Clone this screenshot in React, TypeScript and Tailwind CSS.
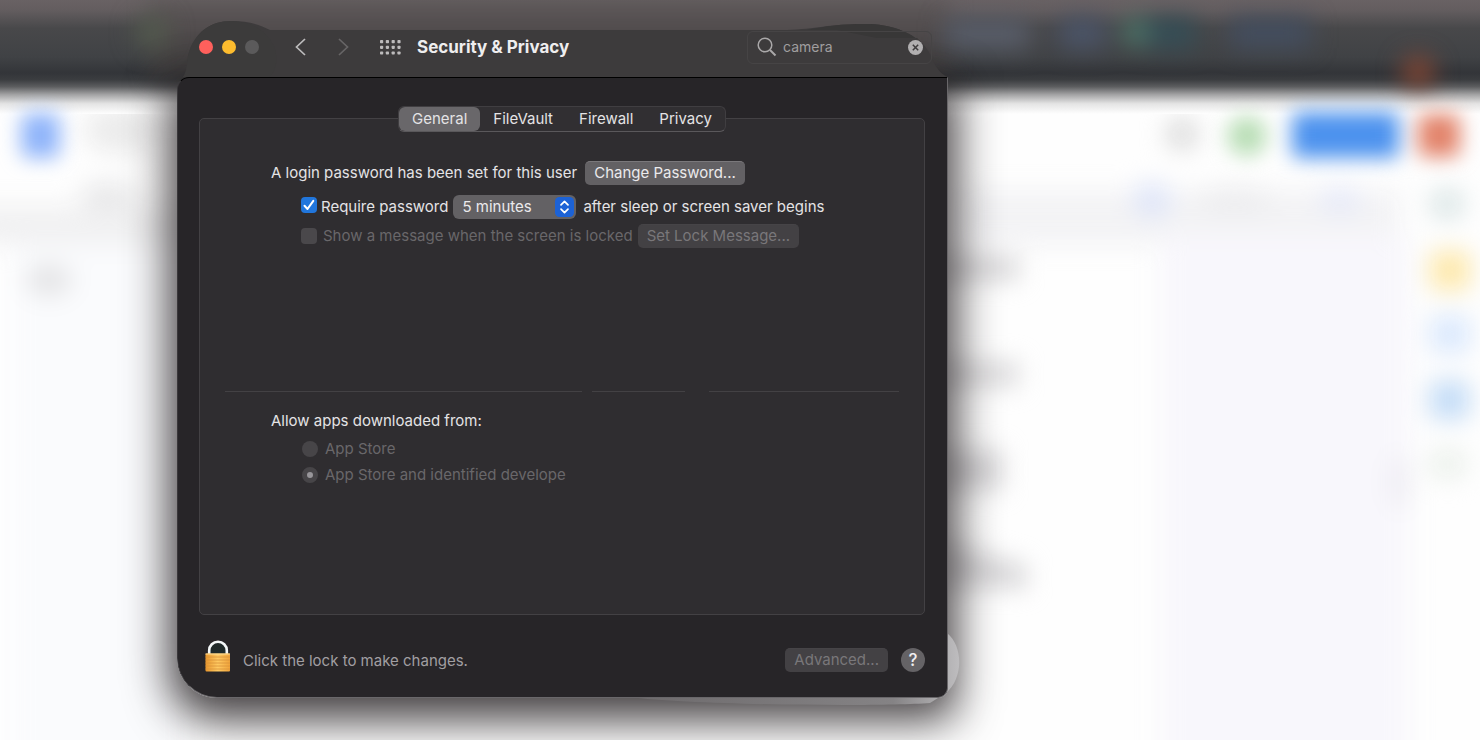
import { useState } from "react";
import type { ReactNode } from "react";

const tabs = ["General", "FileVault", "Firewall", "Privacy"];

const sources = [
  { id: "store", label: "App Store" },
  { id: "identified", label: "App Store and identified develope" },
];

function Desktop() {
  return (
    <svg
      className="absolute inset-0 h-full w-full"
      viewBox="0 0 1480 740"
      preserveAspectRatio="xMinYMin slice"
      aria-hidden="true"
    >
      <defs>
        <filter id="soft" x="-60%" y="-60%" width="220%" height="220%" colorInterpolationFilters="sRGB">
          <feGaussianBlur stdDeviation="12" />
        </filter>
        <filter id="pill" x="-60%" y="-60%" width="220%" height="220%" colorInterpolationFilters="sRGB">
          <feGaussianBlur stdDeviation="10" />
        </filter>
        <linearGradient id="bar" x1="0" y1="0" x2="0" y2="1">
          <stop offset="0" stopColor="#696264" />
          <stop offset="0.09" stopColor="#635d5f" />
          <stop offset="0.25" stopColor="#48484a" />
          <stop offset="0.5" stopColor="#404245" />
          <stop offset="0.64" stopColor="#333539" />
          <stop offset="0.7" stopColor="#3b3d40" />
          <stop offset="0.76" stopColor="#5c5d5f" />
          <stop offset="0.83" stopColor="#a3a3a4" />
          <stop offset="0.91" stopColor="#e4e4e4" />
          <stop offset="1" stopColor="#fefefe" />
        </linearGradient>
        <linearGradient id="mid" x1="0" y1="0" x2="0" y2="1">
          <stop offset="0" stopColor="#605a5b" />
          <stop offset="0.4" stopColor="#504b4c" />
          <stop offset="1" stopColor="#3b3a3a" />
        </linearGradient>
      </defs>
      <rect width="1480" height="740" fill="#fefefe" />
      <g filter="url(#soft)">
        <rect x="10" y="240" width="180" height="540" fill="#fafbfd" />
        <rect x="-30" y="205" width="220" height="40" fill="#f1f1f2" />
        <rect x="960" y="190" width="440" height="55" fill="#f3f3f5" />
        <rect x="1160" y="235" width="250" height="540" fill="#f8f7fc" />
        <ellipse cx="120" cy="130" rx="36" ry="24" fill="#ececec" />
        <ellipse cx="108" cy="196" rx="28" ry="14" fill="#e8e8e9" />
        <ellipse cx="49" cy="280" rx="23" ry="16" fill="#e4e4e6" />
        <rect x="940" y="256" width="78" height="24" fill="#d6d5d7" />
        <rect x="940" y="362" width="78" height="24" fill="#d9d8da" />
        <rect x="940" y="450" width="62" height="40" fill="#d6d5d7" />
        <path d="M940 540L1026 566V588H940z" fill="#d6d5d7" />
        <ellipse cx="1182" cy="134" rx="16" ry="16" fill="#dadada" />
        <ellipse cx="1152" cy="200" rx="20" ry="18" fill="#e0e6f8" />
        <ellipse cx="1235" cy="200" rx="40" ry="14" fill="#ededef" />
        <ellipse cx="1340" cy="200" rx="22" ry="14" fill="#e7eaf8" />
        <ellipse cx="1447" cy="204" rx="18" ry="16" fill="#dbe6e6" />
        <rect x="1430" y="251" width="40" height="39" rx="6" fill="#fde8ab" />
        <rect x="1430" y="315" width="40" height="38" rx="6" fill="#dbe9fd" />
        <rect x="1430" y="381" width="39" height="38" rx="6" fill="#c2dbf6" />
        <ellipse cx="1448" cy="464" rx="20" ry="16" fill="#ecf1ec" />
        <ellipse cx="1400" cy="482" rx="10" ry="28" fill="#edebf2" />
      </g>
      <rect width="1480" height="114" fill="url(#bar)" />
      <rect x="150" width="800" height="78" fill="url(#mid)" filter="url(#pill)" />
      <g filter="url(#soft)">
        <rect x="945" y="20" width="85" height="28" fill="#5a5f6c" />
        <rect x="1060" y="18" width="45" height="30" fill="#4b556a" />
        <circle cx="1136" cy="32" r="14" fill="#4d7a6c" />
        <rect x="1148" y="18" width="48" height="30" fill="#344e57" />
        <rect x="1230" y="18" width="80" height="30" fill="#434e60" />
        <circle cx="152" cy="32" r="17" fill="#535b4e" />
        <circle cx="1418" cy="72" r="16" fill="#874733" />
      </g>
      <g filter="url(#pill)">
        <rect x="21" y="113" width="39" height="45" rx="8" fill="#8fb4fa" />
        <ellipse cx="1247" cy="136" rx="20" ry="20" fill="#b9deb6" />
        <rect x="1292" y="112" width="107" height="46" rx="6" fill="#4c92ee" />
        <rect x="1418" y="114" width="42" height="43" rx="8" fill="#e2836a" />
      </g>
    </svg>
  );
}

function Padlock() {
  return (
    <svg width="26" height="33" viewBox="0 0 26 33" aria-hidden="true">
      <defs>
        <linearGradient id="brass" x1="0" y1="0" x2="1" y2="0">
          <stop offset="0" stopColor="#e8962c" />
          <stop offset="0.5" stopColor="#ffca62" />
          <stop offset="1" stopColor="#f0a33a" />
        </linearGradient>
      </defs>
      <path d="M4.2 15V10.5a8.8 8.8 0 0 1 17.6 0V15" fill="#202a2a" stroke="#f3f7f8" strokeWidth="2.6" />
      <rect x="0.5" y="13.5" width="24.5" height="18" rx="1" fill="url(#brass)" />
      <path d="M0.5 17h24.5M0.5 20h24.5M0.5 23h24.5M0.5 26h24.5M0.5 29h24.5" stroke="#d8923a" strokeWidth="0.8" />
      <path d="M0.5 14h24.5" stroke="#ffe09a" />
    </svg>
  );
}

function PushButton({ children, disabled }: { children: ReactNode; disabled?: boolean }) {
  return (
    <button
      type="button"
      disabled={disabled}
      className="flex h-6 items-center rounded-[5px] border-t border-[#7a787b] bg-[#636164] px-[9px] pb-px text-[15px] leading-5 text-[#ebeaec] disabled:border-[#464447] disabled:bg-[#434144] disabled:text-[#79777a]"
    >
      {children}
    </button>
  );
}

export default function App() {
  const [tab, setTab] = useState("General");
  const [query, setQuery] = useState("camera");
  const [required, setRequired] = useState(true);
  const [delay, setDelay] = useState("5 minutes");

  return (
    <div className="relative min-h-screen overflow-hidden bg-white font-['Inter','Liberation_Sans',sans-serif] text-[15px] leading-5 text-[#e4e3e5]">
      <Desktop />

      <main className="relative pt-5 pl-[177px]">
        <div className="relative w-full max-w-[771px]">
          <div className="absolute inset-x-0 top-[57px] bottom-0 rounded-tl-xl rounded-br-[10px] rounded-bl-[40px] shadow-[0_14px_44px_8px_rgba(20,15,18,0.8)]" />
          {/* Reflections around the window edge */}
          <svg className="absolute -right-3 bottom-[-9px]" width="330" height="80" viewBox="0 0 330 80" aria-hidden="true">
            <defs>
              <linearGradient id="edge" x1="0" y1="0" x2="1" y2="0">
                <stop offset="0" stopColor="#6d6a6c" />
                <stop offset="0.8" stopColor="#858385" />
                <stop offset="1" stopColor="#bebdbf" />
              </linearGradient>
            </defs>
            <path d="M317 6C334 20 333 52 316 66L300 76C250 80 60 78 0 70V66H317z" fill="url(#edge)" />
          </svg>

          {/* Title bar */}
          <header className="relative flex h-[57px] items-center pr-4 pb-[3px] pl-[22px]">
            <svg className="absolute inset-0 h-full w-full" viewBox="0 0 771 57" preserveAspectRatio="none" aria-hidden="true">
              <path
                d="M6 57C10 51 10 44 11 36C17 12 34 1 54 1C70 1 82 4 93 10H610C640 9 650 4 688 4C715 4 733 12 746 24C757 36 755 48 770 57z"
                fill="#3d3b3c"
              />
              <path d="M11 36C17 12 34 1 54 1C75 1 91 11 98 29C101 41 99 51 92 57H7C10 51 10 44 11 36z" fill="#3c3b3b" />
              <path d="M630 10C650 6 665 4 688 4C715 4 733 12 746 24L740 18H700L660 10z" fill="#383737" />
            </svg>
            <div className="relative flex w-full items-center">
              <div className="flex gap-[9px]">
                <button type="button" aria-label="Close" className="size-[14px] rounded-full bg-[#ff605c]" />
                <button type="button" aria-label="Minimize" className="size-[14px] rounded-full bg-[#fdbc2e]" />
                <button type="button" aria-label="Zoom" className="size-[14px] rounded-full bg-[#5b5a5b]" />
              </div>
              <button type="button" aria-label="Back" className="ml-9">
                <svg width="11" height="18" viewBox="0 0 11 18" fill="none" stroke="#bdbcbd" strokeWidth="1.7">
                  <path d="M10 1L1.5 9L10 17" />
                </svg>
              </button>
              <button type="button" aria-label="Forward" disabled className="ml-8">
                <svg width="11" height="18" viewBox="0 0 11 18" fill="none" stroke="#676566" strokeWidth="1.7">
                  <path d="M1 1L9.5 9L1 17" />
                </svg>
              </button>
              <button type="button" aria-label="Show all" className="ml-[31px]">
                <svg width="21" height="15" viewBox="0 0 21 15" fill="#bdbbbc">
                  {[0, 5.7, 11.4].map((y) =>
                    [0, 5.8, 11.6, 17.4].map((x) => <rect key={`${x}-${y}`} x={x} y={y} width="3.2" height="3.2" rx="0.8" />)
                  )}
                </svg>
              </button>
              <h1 className="ml-4 text-[17px] font-bold text-[#efeeef]">Security &amp; Privacy</h1>

              <div className="ml-auto flex h-[33px] w-[185px] items-center rounded-md border border-[#464445] pr-2 pl-[9px]">
                <svg width="20" height="20" viewBox="0 0 20 20" fill="none" stroke="#aaa8a9" strokeWidth="1.5" aria-hidden="true">
                  <circle cx="8" cy="8" r="6.8" />
                  <path d="M13 13L18.5 18.5" strokeWidth="2" />
                </svg>
                <input
                  aria-label="Search"
                  value={query}
                  onChange={(e) => setQuery(e.target.value)}
                  className="ml-1.5 min-w-0 flex-1 bg-transparent text-[14px] text-[#a09e9f] outline-none"
                />
                <button type="button" aria-label="Clear search" onClick={() => setQuery("")}>
                  <svg width="15" height="15" viewBox="0 0 15 15">
                    <circle cx="7.5" cy="7.5" r="7.5" fill="#b1afb0" />
                    <path d="M4.8 4.8L10.2 10.2M10.2 4.8L4.8 10.2" stroke="#3d3b3c" strokeWidth="1.5" />
                  </svg>
                </button>
              </div>
            </div>
          </header>

          {/* Body */}
          <div className="relative rounded-tl-xl rounded-br-[10px] rounded-bl-[40px] border border-t-black border-r-[#69676a] border-b-[#69676a] border-l-[#3a383b] bg-[#272528] pt-7 pr-[22px] pb-6 pl-[21px]">
            <div role="tablist" className="relative z-10 mx-auto flex h-[26px] w-fit rounded-md border border-t-[#403e41] border-r-[#403e41] border-b-[#5a585b] border-l-[#403e41] bg-[#312f32]">
              {tabs.map((name) => (
                <button
                  key={name}
                  type="button"
                  role="tab"
                  aria-selected={tab === name}
                  onClick={() => setTab(name)}
                  className="rounded-md px-[13px] text-[15px] leading-5 aria-selected:bg-[#69676a]"
                >
                  {name}
                </button>
              ))}
            </div>

            <section className="-mt-[14px] min-h-[497px] rounded-[5px] border border-[#434144] bg-[#2f2d30] px-[25px] pt-[42px]">
              <div className="pl-[46px]">
                <div className="flex h-6 items-center gap-2">
                  <span>A login password has been set for this user</span>
                  <PushButton>Change Password...</PushButton>
                </div>

                <div className="mt-2.5 flex h-6 items-center pl-[30px]">
                  <label className="flex items-start gap-1">
                    <span className="relative flex">
                      <input
                        type="checkbox"
                        checked={required}
                        onChange={(e) => setRequired(e.target.checked)}
                        className="peer size-4 appearance-none rounded-[4px] bg-[#555356] checked:bg-[#2176dc]"
                      />
                      <svg
                        className="pointer-events-none absolute inset-0 hidden peer-checked:block"
                        width="16"
                        height="16"
                        viewBox="0 0 16 16"
                        fill="none"
                        stroke="#fff"
                        strokeWidth="2"
                        strokeLinecap="round"
                        strokeLinejoin="round"
                        aria-hidden="true"
                      >
                        <path d="M3.5 8.8L6.5 12L12.3 3.8" />
                      </svg>
                    </span>
                    Require password
                  </label>
                  <div className="relative ml-[5px]">
                    <select
                      aria-label="Password delay"
                      value={delay}
                      onChange={(e) => setDelay(e.target.value)}
                      className="block h-6 w-[123px] appearance-none rounded-md bg-[#636164] pl-[9px] text-[15px] leading-5 text-[#ebeaec]"
                    >
                      <option>immediately</option>
                      <option>5 minutes</option>
                      <option>15 minutes</option>
                      <option>1 hour</option>
                    </select>
                    <svg className="pointer-events-none absolute top-0.5 right-0.5" width="19" height="20" viewBox="0 0 19 20" fill="none" aria-hidden="true">
                      <rect width="19" height="20" rx="4.5" fill="#1c62d6" />
                      <path d="M6 7.8L9.5 4.3L13 7.8M6 12.2L9.5 15.7L13 12.2" stroke="#fff" strokeWidth="1.7" strokeLinecap="round" strokeLinejoin="round" />
                    </svg>
                  </div>
                  <span className="ml-[7px]">after sleep or screen saver begins</span>
                </div>

                <div className="mt-[5px] flex h-6 items-center gap-[5px] pl-[30px]">
                  <label className="flex items-center gap-1.5 text-[#69676a]">
                    <input type="checkbox" disabled className="size-4 appearance-none rounded-[4px] bg-[#4a484b]" />
                    Show a message when the screen is locked
                  </label>
                  <PushButton disabled>Set Lock Message...</PushButton>
                </div>
              </div>

              <div className="mt-[143px] flex h-px" aria-hidden="true">
                <div className="grow-[358] bg-[#434144]" />
                <div className="w-2.5" />
                <div className="grow-[93] bg-[#434144]" />
                <div className="w-6" />
                <div className="grow-[190] bg-[#434144]" />
              </div>

              <fieldset className="mt-[19px] pl-[46px]">
                <legend>Allow apps downloaded from:</legend>
                <div className="mt-2 flex flex-col gap-1.5 pl-[31px] text-[#69676a]">
                  {sources.map(({ id, label }) => (
                    <label key={id} className="flex items-center gap-[7px]">
                      <input
                        type="radio"
                        name="source"
                        disabled
                        defaultChecked={id === "identified"}
                        className="size-4 appearance-none rounded-full bg-[#474548] checked:border-[5px] checked:border-[#474548] checked:bg-[#98969a]"
                      />
                      {label}
                    </label>
                  ))}
                </div>
              </fieldset>
            </section>

            <footer className="mt-[25px] flex items-end pl-1.5">
              <button type="button" className="flex items-end gap-3 text-[#a19fa2]">
                <Padlock />
                <span className="pb-0.5">Click the lock to make changes.</span>
              </button>
              <div className="ml-auto flex items-center gap-[13px] pb-px">
                <PushButton disabled>Advanced...</PushButton>
                <button type="button" aria-label="Help" className="size-6 rounded-full bg-[#656366] text-[17px] leading-6 font-medium text-[#f0eff1]">
                  ?
                </button>
              </div>
            </footer>
          </div>
        </div>
      </main>
    </div>
  );
}
